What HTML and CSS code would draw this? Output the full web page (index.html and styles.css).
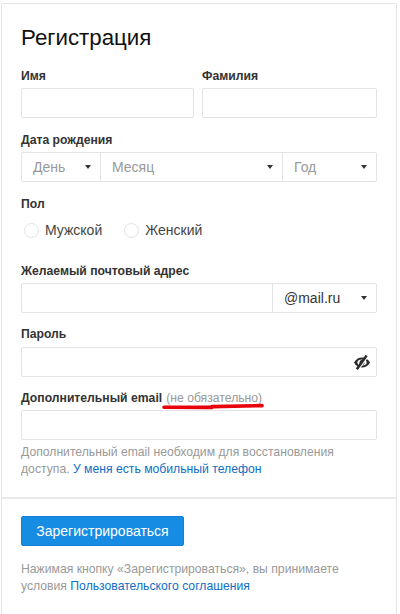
FILE: index.html
```html
<!DOCTYPE html>
<html lang="ru">
<head>
  <meta charset="UTF-8">
  <meta name="viewport" content="width=device-width, initial-scale=1.0">
  <title>Регистрация</title>
  <link rel="stylesheet" href="styles.css">
</head>
<body>
  <div class="card">
    <form class="form">
      <h1 class="title">Регистрация</h1>

      <div class="name-row">
        <div class="name-first">
          <label class="label">Имя</label>
          <div class="field"></div>
        </div>
        <div class="name-last">
          <label class="label">Фамилия</label>
          <div class="field"></div>
        </div>
      </div>

      <label class="label label-date">Дата рождения</label>
      <div class="field group">
        <div class="select select-day"><span class="placeholder">День</span><i class="caret"></i></div>
        <div class="select select-month"><span class="placeholder">Месяц</span><i class="caret"></i></div>
        <div class="select select-year"><span class="placeholder">Год</span><i class="caret"></i></div>
      </div>

      <label class="label label-gender">Пол</label>
      <div class="radios">
        <div class="radio"><span class="radio-dot"></span>Мужской</div>
        <div class="radio"><span class="radio-dot"></span>Женский</div>
      </div>

      <label class="label label-mail">Желаемый почтовый адрес</label>
      <div class="field group">
        <div class="mail-input"></div>
        <div class="select select-domain"><span>@mail.ru</span><i class="caret"></i></div>
      </div>

      <label class="label label-pass">Пароль</label>
      <div class="field field-pass">
        <svg class="eye" width="16" height="15" viewBox="0 0 16 15">
          <path d="M0 7.5C1.8 4.2 4.6 2.4 8 2.4s6.2 1.8 8 5.1c-1.8 3.3-4.6 5.1-8 5.1S1.8 10.8 0 7.5z" fill="#2b2b2b"/>
          <ellipse cx="8" cy="7.5" rx="4.6" ry="2.9" fill="#fff"/>
          <circle cx="8" cy="7.5" r="2.5" fill="#2b2b2b"/>
          <path d="M4 14.4L13.8 .8" stroke="#fff" stroke-width="2.4"/>
          <path d="M2.8 14.2L12.6 .6" stroke="#2b2b2b" stroke-width="2.6"/>
        </svg>
      </div>

      <div class="label-extra">
        <label class="label">Дополнительный email</label>
        <span class="optional">(не обязательно)</span>
        <!-- red marker line on top of the caption -->
        <svg class="marker" width="102" height="8" viewBox="0 0 102 8">
          <path d="M2 5.2L50 5.4M50 4.6L100 3.6" stroke="#e8000b" stroke-width="3.6" stroke-linecap="round" fill="none"/>
        </svg>
      </div>
      <div class="field"></div>
      <p class="hint">Дополнительный email необходим для восстановления доступа. <a href="#">У меня есть мобильный телефон</a></p>
    </form>

    <div class="footer">
      <button class="submit" type="button">Зарегистрироваться</button>
      <p class="terms">Нажимая кнопку «Зарегистрироваться», вы принимаете условия <a href="#">Пользовательского соглашения</a></p>
    </div>
  </div>
</body>
</html>
```

FILE: styles.css
```css
html, body {
  height: 100%;
}

body {
  margin: 0;
  padding: 3px 3px 0 1px;
  box-sizing: border-box;
  background-color: #fff;
  color: #333;
  font-family: "Liberation Sans", Arial, sans-serif;
  overflow: hidden;
}

.card {
  height: 100%;
  box-sizing: border-box;
  border: 1px solid #e5e5e5;
  border-bottom: none;
  border-radius: 2px 2px 0 0;
}

.form {
  padding: 0 19px;
  height: 495px;
  box-sizing: border-box;
  border-bottom: 2px solid #e9e9e9;
}

.title {
  margin: 0;
  padding-top: 20px;
  font-size: 22.3px;
  line-height: 28px;
  font-weight: 400;
  color: #111;
}

.label {
  display: block;
  font-size: 12.2px;
  line-height: 16px;
  font-weight: 700;
  color: #333;
}

.name-row {
  display: flex;
  gap: 8px;
  margin-top: 16px;
}

.name-first { width: 174px; }
.name-last { width: 176px; }

.name-row .label {
  margin-bottom: 4px;
}

.field {
  height: 30px;
  box-sizing: border-box;
  border: 1px solid #e3e3e3;
  border-radius: 2px;
  background-color: #fff;
}

.group {
  display: flex;
}

.label-date { margin-top: 14px; margin-bottom: 4px; }
.label-gender { margin-top: 14px; }
.label-mail { margin-top: 23px; margin-bottom: 4px; }
.label-pass { margin-top: 13px; margin-bottom: 5px; }

.select {
  display: flex;
  align-items: center;
  justify-content: space-between;
  box-sizing: border-box;
  padding: 0 9px 0 11px;
  font-size: 14px;
  border-left: 1px solid #e3e3e3;
}

.select-day { width: 78px; border-left: none; }
.select-month { width: 182px; }
.select-year { flex: 1; }
.mail-input { width: 250px; }

.select-domain {
  flex: 1;
  color: #333;
}

.placeholder {
  color: #999;
}

.caret {
  width: 0;
  height: 0;
  border-left: 3px solid transparent;
  border-right: 3px solid transparent;
  border-top: 4px solid #333;
}

.radios {
  display: flex;
  gap: 22px;
  margin-top: 8px;
  padding-left: 3px;
  height: 20px;
}

.radio {
  display: flex;
  align-items: center;
  gap: 6px;
  font-size: 14px;
  color: #444;
}

.radio-dot {
  width: 13px;
  height: 13px;
  border: 1px solid #e3e3e3;
  border-radius: 50%;
}

.field-pass {
  display: flex;
  align-items: center;
  justify-content: flex-end;
  padding-right: 6px;
}

.label-extra {
  position: relative;
  display: flex;
  gap: 4px;
  margin-top: 13px;
  margin-bottom: 4px;
}

.optional {
  font-size: 12.2px;
  line-height: 16px;
  color: #999;
}

.marker {
  position: absolute;
  left: 141px;
  top: 12px;
}

.hint {
  margin: 4px 0 0;
  font-size: 12.2px;
  line-height: 17px;
  color: #999;
}

a {
  color: #0d6fc4;
  text-decoration: none;
}

.footer {
  padding: 17px 19px 0;
}

.submit {
  display: block;
  width: 163px;
  height: 30px;
  padding: 0;
  border: 1px solid #1580d8;
  border-radius: 2px;
  background-color: #168de2;
  color: #fff;
  font-family: inherit;
  font-size: 14px;
}

.terms {
  margin: 15px 0 0;
  font-size: 12.2px;
  line-height: 17px;
  color: #999;
}
```
